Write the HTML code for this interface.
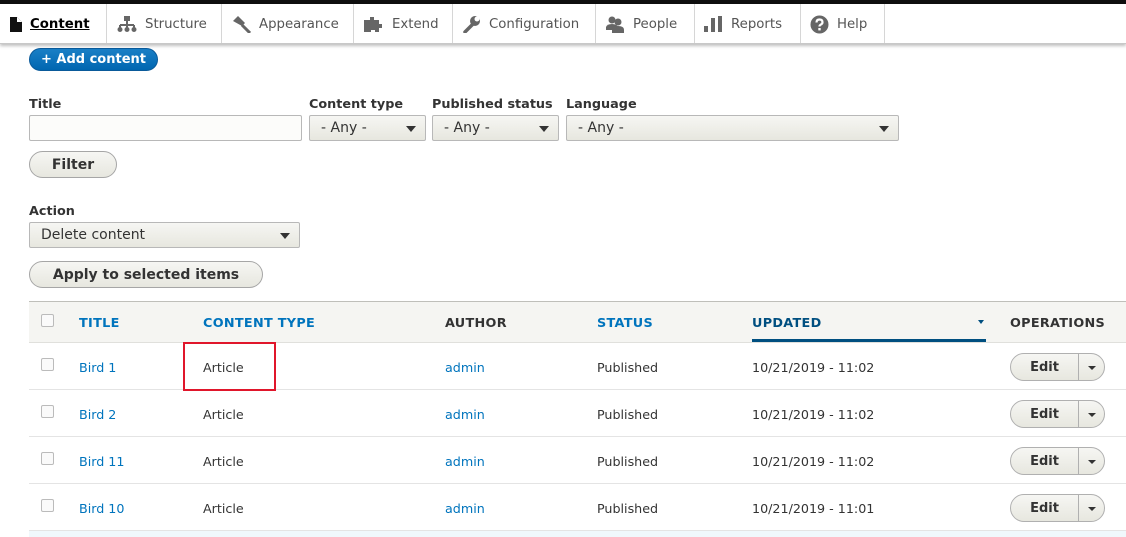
<!DOCTYPE html>
<html><head><meta charset="utf-8"><style>
*{box-sizing:border-box;margin:0;padding:0}
body{width:1126px;height:537px;overflow:hidden;background:#fff;font-family:"DejaVu Sans","Liberation Sans",sans-serif;font-size:13px;color:#333;position:relative}
.a{position:absolute}
.top{left:0;top:0;width:1126px;height:4px;background:#0f0f0f}
.nav{left:0;top:4px;width:1126px;height:40px;background:#fff;border-bottom:1px solid #c8c8c8;box-shadow:0 2px 3px rgba(0,0,0,.25)}
.tab{position:absolute;top:0;height:39px;border-right:1px solid #d6d6d6;display:flex;align-items:center;color:#555;font-size:13.3px;padding-top:1px}
.tab svg{margin-right:8px}
.btn{border:1px solid #a6a6a6;border-radius:20px;background:linear-gradient(#f6f6f3,#e7e7df);font-weight:bold;color:#333;display:flex;align-items:center;justify-content:center}
label{position:absolute;font-weight:bold;font-size:12.8px;color:#333}
.sel{position:absolute;height:26px;border:1px solid #b8b8b8;border-radius:2px;background:linear-gradient(#f6f6f3,#e7e7df);padding-left:11px;line-height:25px;font-size:14px;color:#333}
.sel:after{content:"";position:absolute;right:9px;top:10px;border:5px solid transparent;border-top:6px solid #333;border-bottom:0}
.th{position:absolute;top:316px;font-weight:bold;font-size:12.8px;letter-spacing:.3px}
.blue{color:#0074bd}
.cb{position:absolute;left:41px;width:13px;height:13px;border:1px solid #bbb;border-radius:2px;background:#fafafa}
.row{position:absolute;left:29px;width:1097px;height:47px;border-bottom:1px solid #e4e4e4}
.c{position:absolute;font-size:12.7px}
.edit{position:absolute;left:1010px;width:95px;height:28px;border:1px solid #b0b0b0;border-radius:14px;background:linear-gradient(#f6f6f3,#e7e7df)}
.edit b{position:absolute;left:0;width:67px;top:6px;text-align:center;font-size:13px}
.edit i{position:absolute;left:67px;top:0;width:1px;height:26px;background:#b0b0b0}
.edit u{position:absolute;left:77px;top:12px;border:4px solid transparent;border-top:4px solid #333;border-bottom:0}
</style></head><body>
<div class="a top"></div>
<div class="a nav">
 <div class="tab" style="left:0;width:107px;padding-left:10px;color:#000;font-weight:bold"><svg width="12" height="15" viewBox="0 0 12 15"><path d="M0 0h7l5 5v10H0z" fill="#111"/><path d="M7 0v5h5" fill="#fff"/></svg><span style="text-decoration:underline">Content</span></div>
 <div class="tab" style="left:107px;width:115px;padding-left:10px"><svg width="20" height="16" viewBox="0 0 20 16"><rect x="7" y="0" width="6" height="5" fill="#666"/><path d="M10 5v4M3 9h14M3 9v3M10 9v3M17 9v3" stroke="#666" stroke-width="2" fill="none"/><circle cx="3" cy="13.5" r="2.5" fill="#666"/><circle cx="10" cy="13.5" r="2.5" fill="#666"/><circle cx="17" cy="13.5" r="2.5" fill="#666"/></svg>Structure</div>
 <div class="tab" style="left:222px;width:132px;padding-left:10px"><svg width="19" height="17" viewBox="0 0 19 17"><path d="M1 5l5-5 7 7-3 3z" fill="#666"/><path d="M10 9l8 8" stroke="#666" stroke-width="3"/></svg>Appearance</div>
 <div class="tab" style="left:354px;width:99px;padding-left:10px"><svg width="20" height="16" viewBox="0 0 20 16"><path d="M0 4h6V1h4v3h5v4h3v4h-3v4h-4v-2H7v2H0z" fill="#666"/></svg>Extend</div>
 <div class="tab" style="left:453px;width:143px;padding-left:10px"><svg width="18" height="17" viewBox="0 0 18 17"><path d="M2 16l8-8" stroke="#666" stroke-width="3.5" stroke-linecap="round"/><circle cx="12" cy="5" r="5" fill="#666"/><circle cx="14" cy="3" r="2.5" fill="#fff"/></svg>Configuration</div>
 <div class="tab" style="left:596px;width:99px;padding-left:10px"><svg width="19" height="17" viewBox="0 0 19 17"><circle cx="6" cy="4" r="3.5" fill="#666"/><path d="M0 11q1-3 6-3t6 3v3H0z" fill="#666"/><circle cx="12" cy="6" r="3.5" fill="#666"/><path d="M6 14q0-4 6-4t6 4v3H6z" fill="#666"/></svg>People</div>
 <div class="tab" style="left:695px;width:106px;padding-left:9px"><svg width="19" height="16" viewBox="0 0 19 16"><rect x="0" y="10" width="4" height="6" fill="#666"/><rect x="7" y="2" width="4" height="14" fill="#666"/><rect x="14" y="0" width="4" height="16" fill="#666"/></svg>Reports</div>
 <div class="tab" style="left:801px;width:84px;padding-left:9px"><svg width="19" height="19" viewBox="0 0 19 19"><circle cx="9.5" cy="9.5" r="9" fill="#666"/><path d="M6.5 7.5q0-3 3-3t3 2.8q0 1.6-2 2.5-1 .5-1 1.7" stroke="#fff" stroke-width="2.2" fill="none"/><rect x="8.3" y="13" width="2.4" height="2.4" fill="#fff"/></svg>Help</div>
</div>
<div class="a" style="left:29px;top:48px;width:129px;height:23px;border-radius:12px;background:linear-gradient(#1a7fc6,#0066b0);border:1px solid #0a5a9a;color:#fff;font-weight:bold;font-size:13px;text-align:center;line-height:22px">+ Add content</div>

<label style="left:29px;top:97px">Title</label>
<div class="a" style="left:29px;top:115px;width:273px;height:26px;border:1px solid #b8b8b8;border-radius:2px;background:#fcfcfa"></div>
<label style="left:309px;top:97px">Content type</label>
<div class="sel" style="left:309px;top:115px;width:117px">- Any -</div>
<label style="left:432px;top:97px">Published status</label>
<div class="sel" style="left:432px;top:115px;width:127px">- Any -</div>
<label style="left:566px;top:97px">Language</label>
<div class="sel" style="left:566px;top:115px;width:333px">- Any -</div>
<div class="a btn" style="left:29px;top:151px;width:88px;height:27px;font-size:14px">Filter</div>

<label style="left:29px;top:204px">Action</label>
<div class="sel" style="left:29px;top:222px;width:271px">Delete content</div>
<div class="a btn" style="left:29px;top:261px;width:234px;height:27px;font-size:14px">Apply to selected items</div>

<div class="a" style="left:29px;top:301px;width:1097px;height:42px;background:#f5f5f2;border-top:1px solid #bfbfba;border-bottom:1px solid #e0e0dc"></div>
<div class="cb" style="top:314px"></div>
<div class="th blue" style="left:79px">TITLE</div>
<div class="th blue" style="left:203px">CONTENT TYPE</div>
<div class="th" style="left:445px">AUTHOR</div>
<div class="th blue" style="left:597px">STATUS</div>
<div class="th" style="left:752px;color:#004f80">UPDATED</div>
<div class="a" style="left:978px;top:320px;border:3px solid transparent;border-top:4px solid #004f80;border-bottom:0"></div>
<div class="a" style="left:752px;top:339px;width:234px;height:3px;background:#004f80"></div>
<div class="th" style="left:1010px">OPERATIONS</div>

<div class="row" style="top:343px"></div>
<div class="row" style="top:390px"></div>
<div class="row" style="top:437px"></div>
<div class="row" style="top:484px"></div>
<div class="a" style="left:29px;top:531px;width:1097px;height:6px;background:#f0f8fc"></div>

<div class="cb" style="top:358px"></div><div class="c blue" style="left:79px;top:360px">Bird 1</div><div class="c" style="left:203px;top:360px">Article</div><div class="c blue" style="left:445px;top:360px">admin</div><div class="c" style="left:597px;top:360px">Published</div><div class="c" style="left:752px;top:360px">10/21/2019 - 11:02</div><div class="edit" style="top:353px"><b>Edit</b><i></i><u></u></div>
<div class="cb" style="top:405px"></div><div class="c blue" style="left:79px;top:407px">Bird 2</div><div class="c" style="left:203px;top:407px">Article</div><div class="c blue" style="left:445px;top:407px">admin</div><div class="c" style="left:597px;top:407px">Published</div><div class="c" style="left:752px;top:407px">10/21/2019 - 11:02</div><div class="edit" style="top:400px"><b>Edit</b><i></i><u></u></div>
<div class="cb" style="top:452px"></div><div class="c blue" style="left:79px;top:454px">Bird 11</div><div class="c" style="left:203px;top:454px">Article</div><div class="c blue" style="left:445px;top:454px">admin</div><div class="c" style="left:597px;top:454px">Published</div><div class="c" style="left:752px;top:454px">10/21/2019 - 11:02</div><div class="edit" style="top:447px"><b>Edit</b><i></i><u></u></div>
<div class="cb" style="top:499px"></div><div class="c blue" style="left:79px;top:501px">Bird 10</div><div class="c" style="left:203px;top:501px">Article</div><div class="c blue" style="left:445px;top:501px">admin</div><div class="c" style="left:597px;top:501px">Published</div><div class="c" style="left:752px;top:501px">10/21/2019 - 11:01</div><div class="edit" style="top:494px"><b>Edit</b><i></i><u></u></div>

<div class="a" style="left:183px;top:342px;width:93px;height:49px;border:2px solid #e0162b"></div>
</body></html>
